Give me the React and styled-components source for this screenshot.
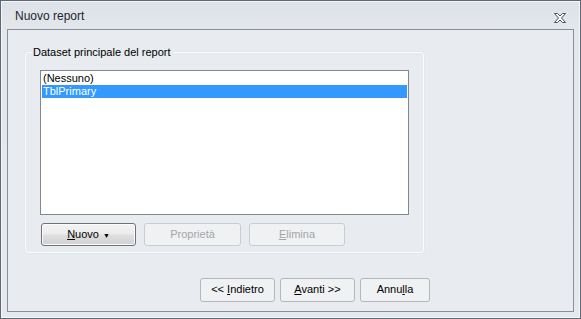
import React from "react";
import styled, { createGlobalStyle, css } from "styled-components";

const Global = createGlobalStyle`
  html, body { margin: 0; padding: 0; background: #e6e9ee; overflow: hidden; }
  body { font-family: "Liberation Sans", Arial, sans-serif; font-size: 11px; color: #000; }
  * { box-sizing: border-box; }
`;

const Window = styled.div`
  width: 581px;
  height: 319px;
  border: 1px solid #5d6873;
  box-shadow: inset 1px 1px 0 #f4f6f8, inset -1px -1px 0 #f4f6f8;
  background: linear-gradient(#dde2e8 0px, #e3e7ec 28px, #e5e8ed 100%);
  display: flex;
  flex-direction: column;
`;

const TitleBar = styled.div`
  height: 28px;
  flex: none;
  display: flex;
  align-items: flex-start;
  justify-content: space-between;
  padding: 7px 14px 0 14px;
`;

const Title = styled.div`
  font-family: "Liberation Sans", Arial, sans-serif;
  font-size: 12px;
  line-height: 16px;
  color: #1d2430;
`;

const CloseIcon = styled.svg`
  margin-top: 5px;
  width: 12px;
  height: 10px;
  display: block;
`;

const Client = styled.div`
  flex: 1;
  margin: 0 6px 6px 6px;
  border: 1px solid #888f97;
  background: #e8ebef;
  display: flex;
  flex-direction: column;
`;

const GroupBox = styled.div`
  position: relative;
  margin: 22px 0 0 17px;
  width: 399px;
  height: 201px;
  border: 1px solid #fbfcfd;
  border-radius: 3px;
  box-shadow: 0 0 0 0.5px #dfe4e9;
  padding: 17px 0 0 14px;
`;

const Legend = styled.div`
  position: absolute;
  top: -8px;
  left: 6px;
  padding: 0 2px 0 1px;
  background: #e8ebef;
  line-height: 14px;
  white-space: nowrap;
`;

const ListBox = styled.div`
  width: 369px;
  height: 145px;
  border: 1px solid #828790;
  background: #fff;
  padding: 1px;
`;

const ListItem = styled.div`
  height: 13px;
  line-height: 13px;
  padding-left: 1px;
  white-space: nowrap;
  ${(p) =>
    p.$selected &&
    css`
      background: #3399ff;
      color: #fff;
    `}
`;

const ButtonRow = styled.div`
  display: flex;
  gap: ${(p) => p.$gap}px;
  margin: ${(p) => p.$margin};
`;

const Button = styled.div`
  width: ${(p) => p.$w}px;
  height: ${(p) => p.$h}px;
  border-radius: 3px;
  display: flex;
  align-items: center;
  justify-content: center;
  white-space: nowrap;
  line-height: 13px;
  ${(p) =>
    p.$variant === "default" &&
    css`
      border: 1px solid #6f7378;
      background: linear-gradient(#f3f3f3 0%, #ececec 45%, #dedede 55%, #d2d2d2 100%);
      box-shadow: inset 0 0 0 1px #fbfbfb;
      color: #000;
    `}
  ${(p) =>
    p.$variant === "disabled" &&
    css`
      border: 1px solid #c9cdd1;
      background: #eff1f3;
      color: #a2a6aa;
    `}
  ${(p) =>
    p.$variant === "flat" &&
    css`
      border: 1px solid #b3b7bb;
      background: #eff1f3;
      color: #000;
    `}
  padding-bottom: 1px;
`;

const U = styled.span`
  text-decoration: underline;
  text-underline-offset: 1px;
`;

const Caret = styled.span`
  font-size: 7px;
  margin-left: 4px;
  position: relative;
  top: 1px;
`;

export default function App() {
  return (
    <>
      <Global />
      <Window>
        <TitleBar>
          <Title>Nuovo report</Title>
          <CloseIcon viewBox="0 0 12 10">
            <polygon
              points="0.5,0.5 3.5,0.5 6,3 8.5,0.5 11.5,0.5 7.5,5 11.5,9.5 8.5,9.5 6,7 3.5,9.5 0.5,9.5 4.5,5"
              fill="#fbfcfd"
              stroke="#46505a"
              strokeWidth="1"
              strokeLinejoin="miter"
            />
          </CloseIcon>
        </TitleBar>
        <Client>
          <GroupBox>
            <Legend>Dataset principale del report</Legend>
            <ListBox>
              <ListItem>(Nessuno)</ListItem>
              <ListItem $selected>TblPrimary</ListItem>
            </ListBox>
            <ButtonRow $gap={8} $margin="8px 0 0 1px">
              <Button $w={95} $h={23} $variant="default">
                <span>
                  <U>N</U>uovo
                </span>
                <Caret>▼</Caret>
              </Button>
              <Button $w={97} $h={23} $variant="disabled">
                Proprietà
              </Button>
              <Button $w={96} $h={23} $variant="disabled">
                <span>
                  <U>E</U>limina
                </span>
              </Button>
            </ButtonRow>
          </GroupBox>
          <ButtonRow $gap={5} $margin="25px 0 0 192px">
            <Button $w={75} $h={24} $variant="flat">
              <span>
                &lt;&lt; <U>I</U>ndietro
              </span>
            </Button>
            <Button $w={75} $h={24} $variant="flat">
              <span>
                <U>A</U>vanti &gt;&gt;
              </span>
            </Button>
            <Button $w={70} $h={24} $variant="flat">
              <span>
                Annu<U>l</U>la
              </span>
            </Button>
          </ButtonRow>
        </Client>
      </Window>
    </>
  );
}
